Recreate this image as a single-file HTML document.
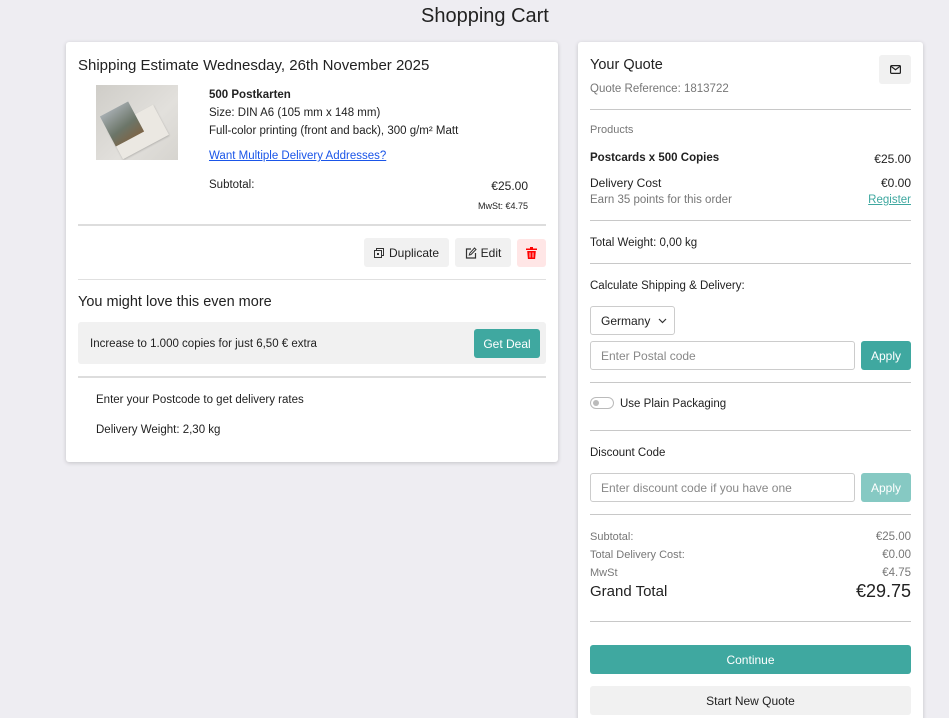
<!DOCTYPE html>
<html><head><meta charset="utf-8"><style>
*{margin:0;padding:0;box-sizing:border-box}
html{width:949px;height:718px;overflow:hidden}
body{width:949px;height:718px;background:#eeedf2;font-family:"Liberation Sans",sans-serif;color:#222;position:relative;overflow:hidden}
.t{position:absolute;white-space:nowrap;line-height:1;font-size:12px;margin-top:2px}
.card{position:absolute;background:#fff;border-radius:3px;box-shadow:0 1px 4px rgba(0,0,0,.18)}
.hr{position:absolute;height:1px;background:#c8c8c8}
.hr2{position:absolute;height:2px;background:#ddd}
.btn{position:absolute;border-radius:3px;display:flex;align-items:center;justify-content:center;font-size:12px}
.inp{position:absolute;border:1px solid #ccc;border-radius:3px;background:#fff;font-size:12px;color:#888;display:flex;align-items:center;padding-left:10px}
.r{text-align:right}
.g{color:#777}
</style></head><body>
<div class="t" style="left:421px;top:4px;font-size:20px;color:#222">Shopping Cart</div>

<div class="card" style="left:66px;top:42px;width:492px;height:420px"></div>
<div class="t" style="left:78px;top:56px;font-size:15px">Shipping Estimate Wednesday, 26th November 2025</div>
<div style="position:absolute;left:96px;top:85px;width:82px;height:75px;overflow:hidden;background:linear-gradient(135deg,#cfcdc8,#e2e0dc 60%,#d6d4cf)">
<div style="position:absolute;left:16px;top:30px;width:52px;height:34px;background:#ebe8e2;transform:rotate(-28deg);box-shadow:0 1px 2px rgba(0,0,0,.2)"></div>
<div style="position:absolute;left:10px;top:22px;width:32px;height:34px;background:linear-gradient(170deg,#a7aeb2,#6b7568 60%,#7d6446);transform:rotate(-28deg)"></div>
</div>
<div class="t" style="left:209px;top:88px;font-weight:bold;font-size:11.5px">500 Postkarten</div>
<div class="t" style="left:209px;top:106px;font-size:11.5px">Size: DIN A6 (105 mm x 148 mm)</div>
<div class="t" style="left:209px;top:124px;font-size:11.5px">Full-color printing (front and back), 300 g/m² Matt</div>
<div class="t" style="left:209px;top:149px;font-size:11.5px;color:#1a55e8;text-decoration:underline">Want Multiple Delivery Addresses?</div>
<div class="t" style="left:209px;top:178px;font-size:11.5px">Subtotal:</div>
<div class="t r" style="right:421px;top:178px;font-size:12px">€25.00</div>
<div class="t r" style="right:421px;top:200px;font-size:9px">MwSt: €4.75</div>
<div class="hr2" style="left:78px;top:224px;width:468px"></div>
<div class="btn" style="left:364px;top:238px;width:85px;height:29px;background:#f1f1f1">
<svg width="10" height="10" viewBox="0 0 10 10" style="margin-right:5px"><rect x="0.5" y="2.5" width="7" height="7" fill="none" stroke="#333"/><path d="M2.5 2.5V.5h7v7h-2" fill="none" stroke="#333"/><rect x="3" y="5" width="2" height="2" fill="#333"/></svg>Duplicate</div>
<div class="btn" style="left:455px;top:238px;width:56px;height:29px;background:#f1f1f1">
<svg width="12" height="12" viewBox="0 0 12 12" style="margin-right:4px"><path d="M6 2H1.5v9h9V6" fill="none" stroke="#333" stroke-width="1.2"/><path d="M9.5 1l1.5 1.5L6 7.5 4.3 8l.5-1.8z" fill="none" stroke="#333"/></svg>Edit</div>
<div class="btn" style="left:517px;top:239px;width:29px;height:28px;background:#ffe6e6">
<svg width="11" height="12" viewBox="0 0 11 12"><rect x="0" y="1.5" width="11" height="1.5" fill="#f00"/><rect x="4" y="0" width="3" height="2" fill="#f00"/><path d="M1.2 4h8.6l-.7 8H1.9z" fill="#f00"/><path d="M4 5.5v5M7 5.5v5" stroke="#fff" stroke-width=".8"/></svg></div>
<div class="hr" style="left:78px;top:279px;width:468px;background:#e0e0e0"></div>
<div class="t" style="left:78px;top:293px;font-size:14.5px">You might love this even more</div>
<div style="position:absolute;left:78px;top:322px;width:468px;height:42px;background:#f1f1f1;border-radius:3px"></div>
<div class="t" style="left:90px;top:337px;font-size:11.5px">Increase to 1.000 copies for just 6,50 € extra</div>
<div class="btn" style="left:474px;top:329px;width:66px;height:29px;background:#3fa8a0;color:#fff;font-size:12px">Get Deal</div>
<div class="hr2" style="left:78px;top:376px;width:468px"></div>
<div class="t" style="left:96px;top:393px;font-size:11.5px">Enter your Postcode to get delivery rates</div>
<div class="t" style="left:96px;top:423px;font-size:11.5px">Delivery Weight: 2,30 kg</div>

<div class="card" style="left:578px;top:42px;width:345px;height:690px"></div>
<div class="t" style="left:590px;top:56px;font-size:14.5px">Your Quote</div>
<div class="t g" style="left:590px;top:82px;font-size:11.5px">Quote Reference: 1813722</div>
<div class="btn" style="left:879px;top:55px;width:32px;height:29px;background:#f1f1f1">
<svg width="11" height="9" viewBox="0 0 11 9"><rect x=".6" y=".6" width="9.8" height="7.8" rx="1" fill="none" stroke="#222" stroke-width="1.2"/><path d="M.8 1.2l4.7 3.5 4.7-3.5" fill="none" stroke="#222" stroke-width="1.2"/></svg></div>
<div class="hr" style="left:590px;top:109px;width:321px"></div>
<div class="t g" style="left:590px;top:123px;font-size:11px">Products</div>
<div class="t" style="left:590px;top:151px;font-size:11.5px;font-weight:bold">Postcards x 500 Copies</div>
<div class="t r" style="right:38px;top:151px;font-size:12px">€25.00</div>
<div class="t" style="left:590px;top:175px;font-size:12px">Delivery Cost</div>
<div class="t r" style="right:38px;top:175px;font-size:12px">€0.00</div>
<div class="t g" style="left:590px;top:193px;font-size:11.5px">Earn 35 points for this order</div>
<div class="t r" style="right:38px;top:193px;font-size:11.5px;color:#3fa8a0;text-decoration:underline">Register</div>
<div class="hr" style="left:590px;top:220px;width:321px"></div>
<div class="t" style="left:590px;top:236px;font-size:11.5px">Total Weight: 0,00 kg</div>
<div class="hr" style="left:590px;top:263px;width:321px"></div>
<div class="t" style="left:590px;top:279px;font-size:11.5px">Calculate Shipping &amp; Delivery:</div>
<div class="inp" style="left:590px;top:306px;width:85px;height:29px;color:#222">Germany <svg width="9" height="6" viewBox="0 0 9 6" style="margin-left:8px"><path d="M1 1l3.5 3.5L8 1" fill="none" stroke="#333" stroke-width="1.2"/></svg></div>
<div class="inp" style="left:590px;top:341px;width:265px;height:29px">Enter Postal code</div>
<div class="btn" style="left:861px;top:341px;width:50px;height:29px;background:#3fa8a0;color:#fff">Apply</div>
<div class="hr" style="left:590px;top:382px;width:321px"></div>
<div style="position:absolute;left:590px;top:397px;width:24px;height:12px;border:1px solid #bbb;border-radius:6px"><div style="position:absolute;left:2px;top:2px;width:6px;height:6px;border-radius:50%;background:#bbb"></div></div>
<div class="t" style="left:620px;top:397px;font-size:11.5px">Use Plain Packaging</div>
<div class="hr" style="left:590px;top:430px;width:321px"></div>
<div class="t" style="left:590px;top:446px;font-size:11.5px">Discount Code</div>
<div class="inp" style="left:590px;top:473px;width:265px;height:29px">Enter discount code if you have one</div>
<div class="btn" style="left:861px;top:473px;width:50px;height:29px;background:#86c9c3;color:#fff">Apply</div>
<div class="hr" style="left:590px;top:514px;width:321px"></div>
<div class="t g" style="left:590px;top:530px;font-size:11px">Subtotal:</div>
<div class="t r g" style="right:38px;top:530px;font-size:11.5px">€25.00</div>
<div class="t g" style="left:590px;top:548px;font-size:11px">Total Delivery Cost:</div>
<div class="t r g" style="right:38px;top:548px;font-size:11.5px">€0.00</div>
<div class="t g" style="left:590px;top:566px;font-size:11px">MwSt</div>
<div class="t r g" style="right:38px;top:566px;font-size:11.5px">€4.75</div>
<div class="t" style="left:590px;top:582px;font-size:15px">Grand Total</div>
<div class="t r" style="right:38px;top:580px;font-size:18px">€29.75</div>
<div class="hr" style="left:590px;top:621px;width:321px"></div>
<div class="btn" style="left:590px;top:645px;width:321px;height:29px;background:#3fa8a0;color:#fff">Continue</div>
<div class="btn" style="left:590px;top:686px;width:321px;height:29px;background:#f1f1f1">Start New Quote</div>
</body></html>
